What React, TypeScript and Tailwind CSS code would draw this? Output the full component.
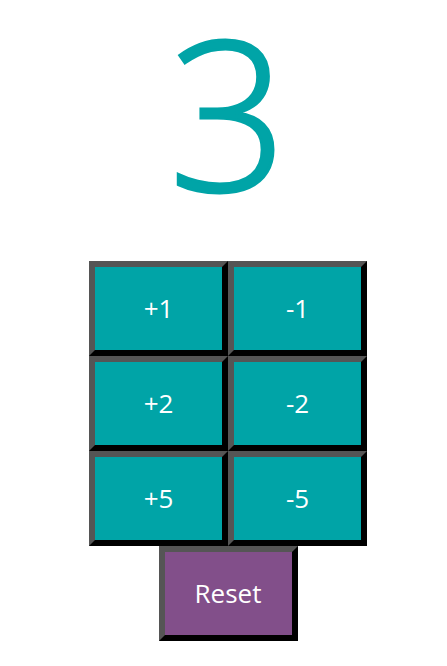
import { useState } from "react";

const STEPS = [
  [1, -1],
  [2, -2],
  [5, -5],
];

function CounterButton({
  label,
  onClick,
  tone = "teal",
}: {
  label: string;
  onClick: () => void;
  tone?: "teal" | "purple";
}) {
  return (
    <button
      type="button"
      onClick={onClick}
      className={`flex h-[95px] w-[139px] items-center justify-center border-[6px] border-t-[#555555] border-l-[#555555] border-b-black border-r-black text-[26px] text-white ${
        tone === "teal" ? "bg-[#00a4a7]" : "bg-[#824f8a]"
      }`}
    >
      {label}
    </button>
  );
}

export default function App() {
  const [count, setCount] = useState(3);

  return (
    <div
      className="min-h-[666px] w-full bg-white"
      style={{ fontFamily: '"Open Sans", "Noto Sans", sans-serif' }}
    >
      <div className="pl-[9px] text-center text-[208px] font-light leading-[1.07] text-[#00a4a7] [-webkit-text-stroke:3px_#00a4a7]">
        {count}
      </div>

      <div className="mt-[38px] ml-[89px] flex w-[278px] flex-col items-center">
        <div className="grid grid-cols-2">
          {STEPS.flat().map((n) => (
            <CounterButton
              key={n}
              label={n > 0 ? `+${n}` : `${n}`}
              onClick={() => setCount((c) => c + n)}
            />
          ))}
        </div>
        <CounterButton label="Reset" tone="purple" onClick={() => setCount(0)} />
      </div>
    </div>
  );
}
